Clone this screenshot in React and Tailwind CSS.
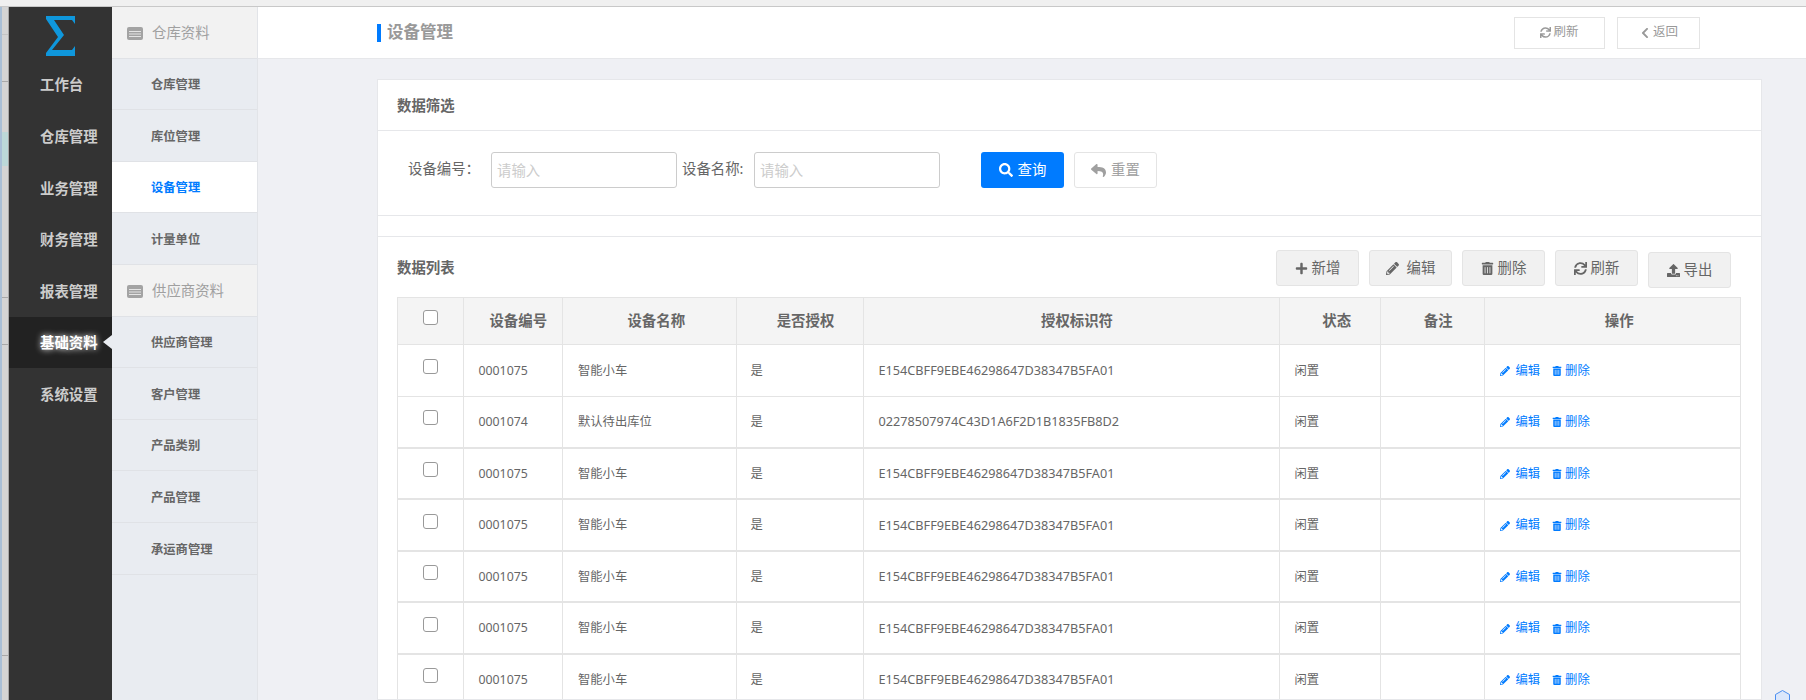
import React from "react";
import {
  FaSync,
  FaChevronLeft,
  FaPlus,
  FaPencilAlt,
  FaTrashAlt,
  FaUpload,
  FaSearch,
  FaReply,
} from "react-icons/fa";

const MAIN_MENU = ["工作台", "仓库管理", "业务管理", "财务管理", "报表管理", "基础资料", "系统设置"];

const SUB_MENU = [
  { label: "仓库资料", group: true },
  { label: "仓库管理" },
  { label: "库位管理" },
  { label: "设备管理", active: true },
  { label: "计量单位" },
  { label: "供应商资料", group: true },
  { label: "供应商管理" },
  { label: "客户管理" },
  { label: "产品类别" },
  { label: "产品管理" },
  { label: "承运商管理" },
];

const UUID = "E154CBFF9EBE46298647D38347B5FA01";

const ROWS = [
  { no: "0001075", name: "智能小车", uuid: UUID },
  { no: "0001074", name: "默认待出库位", uuid: "02278507974C43D1A6F2D1B1835FB8D2" },
  { no: "0001075", name: "智能小车", uuid: UUID, thick: true },
  { no: "0001075", name: "智能小车", uuid: UUID, thick: true },
  { no: "0001075", name: "智能小车", uuid: UUID, thick: true },
  { no: "0001075", name: "智能小车", uuid: UUID, thick: true },
  { no: "0001075", name: "智能小车", uuid: UUID, thick: true },
];

const TOOLBAR = [
  { label: "新增", icon: FaPlus },
  { label: "编辑", icon: FaPencilAlt, wide: true },
  { label: "删除", icon: FaTrashAlt },
  { label: "刷新", icon: FaSync },
  { label: "导出", icon: FaUpload, low: true },
];

function GroupIcon() {
  return (
    <svg width="16" height="13" viewBox="0 0 16 13">
      <rect width="16" height="13" rx="2" fill="#a3a3a3" />
      <path d="M2 4.5h12M2 7h12M2 9.5h12" stroke="#e4e4e4" strokeWidth="1" />
    </svg>
  );
}

function LeftStrip() {
  return (
    <div className="w-[9px] shrink-0 flex flex-col border-l-2 border-l-[#a9bfd6] border-r border-r-[#a8a8a8] bg-[#d4d4d4]">
      <div className="h-[28px] border-b border-[#c4c4c4]"></div>
      <div className="h-[47px] border-b border-[#a8a8a8]"></div>
      <div className="h-[50px]"></div>
      <div className="h-[34px] bg-[#bcd8d8]"></div>
      <div className="h-[132px] border-b border-[#a8a8a8]"></div>
      <div className="h-[47px] border-b border-[#a8a8a8]"></div>
      <div className="h-[311px] border-b border-[#a8a8a8]"></div>
    </div>
  );
}

function MainMenu() {
  return (
    <div className="w-[103px] shrink-0 bg-[#333333]">
      <div className="h-[52px] pl-[37px] pt-[9px]">
        <svg width="29" height="40" viewBox="0 0 29 40">
          <path d="M0 0H29V8L26 4H8L18 19L6 34H26L29 30V40H0V37L12 21L0 3Z" fill="#0f97dc" />
        </svg>
      </div>
      {MAIN_MENU.map((item) => {
        const active = item === "基础资料";
        return (
          <div
            key={item}
            className={`relative h-[51.56px] pl-[31px] pt-[1px] flex items-center text-[14.4px] font-bold ${
              active ? "bg-[#222222] text-white [text-shadow:0_0_6px_#ffffff]" : "text-[#cccccc]"
            }`}
          >
            {item}
            {active && (
              <span className="absolute right-0 top-[18px] w-0 h-0 border-y-[7px] border-y-transparent border-r-[9px] border-r-[#e9ecf1]"></span>
            )}
          </div>
        );
      })}
    </div>
  );
}

function SubMenu() {
  return (
    <div className="w-[146px] shrink-0 bg-[#e9ecf1] border-r border-[#e2e4e8]">
      {SUB_MENU.map((item) =>
        item.group ? (
          <div
            key={item.label}
            className="h-[51.6px] flex items-center gap-[9px] pl-[15px] pt-[2px] bg-[#f2f2f2] border-b border-[#e0e2e6] text-[14.4px] text-[#a0a0a0]"
          >
            <GroupIcon />
            {item.label}
          </div>
        ) : (
          <div
            key={item.label}
            className={`h-[51.6px] flex items-center pl-[39px] pt-[3px] border-b border-[#e0e2e6] text-[12.3px] font-semibold ${
              item.active ? "bg-white text-[#007bff]" : "text-[#666666]"
            }`}
          >
            {item.label}
          </div>
        )
      )}
    </div>
  );
}

function Header() {
  return (
    <div className="h-[52px] shrink-0 flex items-center bg-white border-b border-[#e6e7ea] pl-[119px]">
      <span className="w-[4px] h-[18px] bg-[#007bff]"></span>
      <span className="ml-[6px] text-[16.5px] font-bold text-[#999999]">设备管理</span>
      <button className="ml-[1061px] w-[91px] h-[32px] flex items-center justify-center gap-[2px] border border-[#e4e4e4] text-[12.5px] text-[#999999]">
        <FaSync className="text-[11px]" />
        刷新
      </button>
      <button className="ml-[12px] w-[83px] h-[32px] flex items-center justify-center gap-[2px] border border-[#e4e4e4] text-[12.5px] text-[#999999]">
        <FaChevronLeft className="text-[12px]" />
        返回
      </button>
    </div>
  );
}

function FilterBar() {
  return (
    <div className="h-[85px] flex items-start pt-[21px] border-b border-[#e6e7ea]">
      <label className="ml-[30px] w-[83px] h-[36px] leading-[34px] text-[14.4px] text-[#666666] whitespace-nowrap">
        设备编号：
      </label>
      <input
        placeholder="请输入"
        className="w-[186px] h-[36px] px-[5px] border border-[#cccccc] rounded-[3px] text-[14.4px] placeholder:text-[#cccccc]"
      />
      <label className="ml-[5px] w-[72px] h-[36px] leading-[34px] text-[14.4px] text-[#666666] whitespace-nowrap">
        设备名称:
      </label>
      <input
        placeholder="请输入"
        className="w-[186px] h-[36px] px-[5px] border border-[#cccccc] rounded-[3px] text-[14.4px] placeholder:text-[#cccccc]"
      />
      <button className="ml-[41px] w-[83px] h-[36px] flex items-center justify-center gap-[5px] bg-[#007bff] rounded-[3px] text-[14.4px] text-white">
        <FaSearch className="text-[14px]" />
        查询
      </button>
      <button className="ml-[10px] w-[83px] h-[36px] flex items-center justify-center gap-[5px] border border-[#e4e4e4] rounded-[3px] text-[14.4px] text-[#a0a0a0]">
        <FaReply className="text-[15px]" />
        重置
      </button>
    </div>
  );
}

function Toolbar() {
  return (
    <div className="h-[60px] flex items-start pl-[19px] pr-[30px]">
      <span className="mt-[20px] text-[14.4px] font-bold text-[#666666]">数据列表</span>
      <div className="ml-auto mt-[13px] flex items-start gap-[10px]">
        {TOOLBAR.map(({ label, icon: Icon, wide, low }) => (
          <button
            key={label}
            className={`w-[83px] h-[36px] flex items-center justify-center border border-[#e4e4e4] rounded-[3px] bg-[#f1f1f1] text-[14.4px] text-[#666666] ${
              wide ? "gap-[8px]" : "gap-[4px]"
            } ${low ? "mt-[2px]" : ""}`}
          >
            <Icon className="text-[13px]" />
            {label}
          </button>
        ))}
      </div>
    </div>
  );
}

function Checkbox() {
  return <span className="inline-block w-[15px] h-[15px] border border-[#999999] rounded-[3px] bg-white"></span>;
}

function DeviceTable() {
  return (
    <table className="ml-[19px] w-[1343px] table-fixed border-collapse text-[12.3px] text-[#666666]">
      <colgroup>
        <col className="w-[65.5px]" />
        <col className="w-[99.5px]" />
        <col className="w-[173.5px]" />
        <col className="w-[127px]" />
        <col className="w-[416px]" />
        <col className="w-[101.5px]" />
        <col className="w-[103.5px]" />
        <col className="w-[256.5px]" />
      </colgroup>
      <thead>
        <tr className="h-[47px] bg-[#f4f4f4] text-[14.4px] font-bold">
          <th className="border border-[#e4e4e4] pb-[2px]">
            <Checkbox />
          </th>
          <th className="border border-[#e4e4e4] pl-[11px]">设备编号</th>
          <th className="border border-[#e4e4e4] pl-[14px]">设备名称</th>
          <th className="border border-[#e4e4e4] pl-[12px]">是否授权</th>
          <th className="border border-[#e4e4e4] pl-[12px]">授权标识符</th>
          <th className="border border-[#e4e4e4] pl-[14px]">状态</th>
          <th className="border border-[#e4e4e4] pl-[12px]">备注</th>
          <th className="border border-[#e4e4e4] pl-[14px]">操作</th>
        </tr>
      </thead>
      <tbody>
        {ROWS.map((r, i) => (
          <tr key={i} className={`h-[51.5px] ${r.thick ? "border-t-2 border-[#e4e4e4]" : ""}`}>
            <td className="border border-[#e4e4e4] text-center pb-[2px]">
              <Checkbox />
            </td>
            <td className="border border-[#e4e4e4] pl-[15px] pt-[1px]">{r.no}</td>
            <td className="border border-[#e4e4e4] pl-[15px] pt-[1px]">{r.name}</td>
            <td className="border border-[#e4e4e4] pl-[14px] pt-[1px]">是</td>
            <td className="border border-[#e4e4e4] pl-[15px] pt-[1px] text-[12.7px]">{r.uuid}</td>
            <td className="border border-[#e4e4e4] pl-[15px] pt-[1px]">闲置</td>
            <td className="border border-[#e4e4e4]"></td>
            <td className="border border-[#e4e4e4] pl-[15px] pt-[3px] text-[#007bff]">
              <span className="inline-flex items-center">
                <FaPencilAlt className="text-[10px] mr-[6px]" />
                编辑
                <FaTrashAlt className="text-[10px] ml-[12px] mr-[3px]" />
                删除
              </span>
            </td>
          </tr>
        ))}
      </tbody>
    </table>
  );
}

export default function App() {
  return (
    <div className="w-[1806px] h-[700px] overflow-hidden flex flex-col bg-[#eff0f4] font-['Noto_Sans','Noto_Sans_CJK_SC',sans-serif]">
      <div className="h-[7px] shrink-0 bg-[#f0f0f0] border-b border-[#c8c8c8]"></div>
      <div className="flex flex-1 min-h-0">
        <LeftStrip />
        <MainMenu />
        <SubMenu />
        <div className="relative flex-1 min-w-0 flex flex-col">
          <Header />
          <div className="flex-1 min-h-0 pl-[119px] pr-[44px] pt-[20px]">
            <div className="h-full overflow-hidden bg-white border border-[#e6e7ea]">
              <div className="h-[51px] flex items-center pl-[19px] pt-[2px] border-b border-[#e6e7ea] text-[14.4px] font-bold text-[#666666]">
                数据筛选
              </div>
              <FilterBar />
              <div className="h-[21px] border-b border-[#e6e7ea]"></div>
              <Toolbar />
              <DeviceTable />
            </div>
          </div>
          {/* corner widget, cut by the window edge */}
          <svg className="absolute right-[16px] bottom-0" width="15" height="10" viewBox="0 0 15 10">
            <path d="M0.5 11V4.5L7.5 0.5L14.5 4.5V11" fill="#dbe7fb" stroke="#4c8ff0" />
          </svg>
        </div>
      </div>
    </div>
  );
}
